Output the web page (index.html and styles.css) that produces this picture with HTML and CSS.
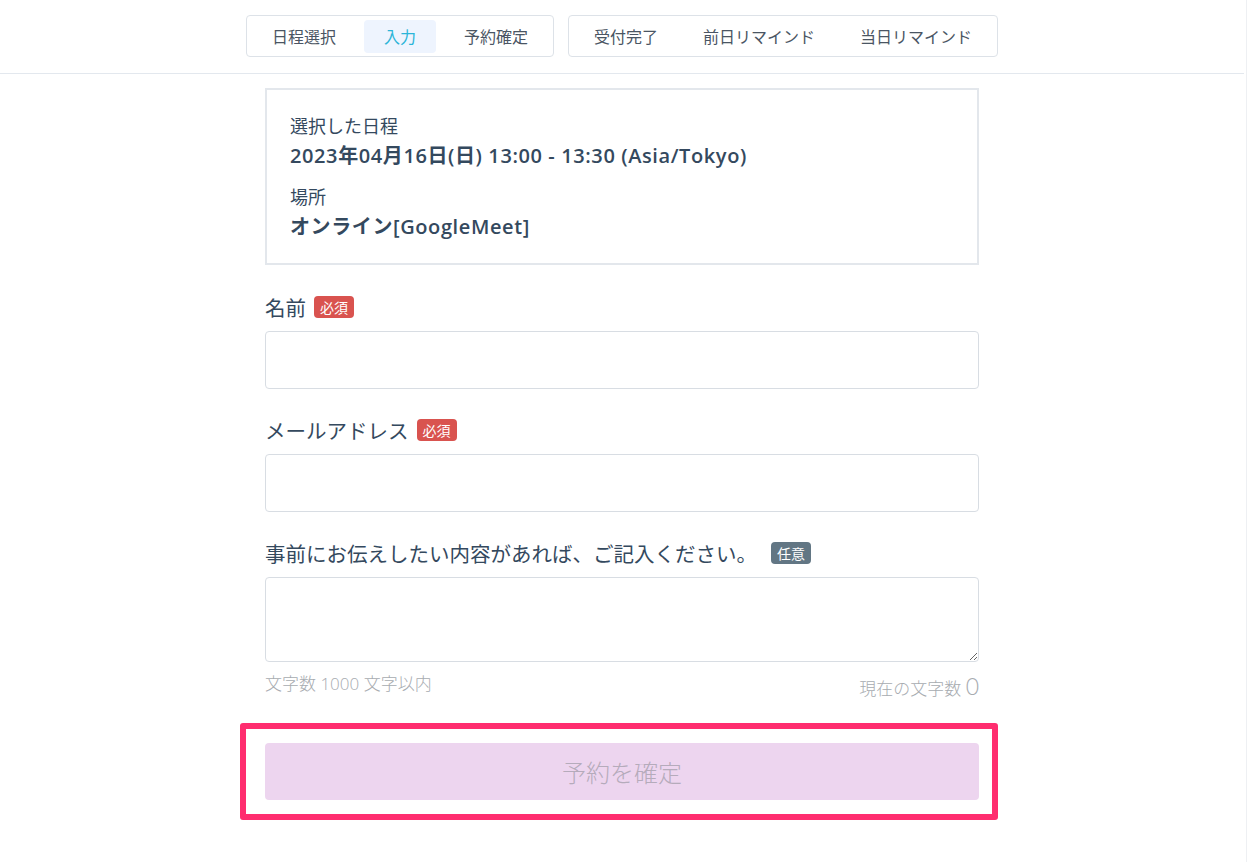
FILE: index.html
```html
<!DOCTYPE html>
<html lang="ja">
<head>
<meta charset="utf-8">
<title>予約入力</title>
<link rel="stylesheet" href="styles.css">
</head>
<body>
<div class="page">
  <header class="header">
    <nav class="tabgroup">
      <span class="tab">日程選択</span>
      <span class="tab active">入力</span>
      <span class="tab">予約確定</span>
    </nav>
    <nav class="tabgroup right">
      <span class="tab">受付完了</span>
      <span class="tab">前日リマインド</span>
      <span class="tab">当日リマインド</span>
    </nav>
  </header>
  <main class="main">
    <section class="summary">
      <div class="sum-label">選択した日程</div>
      <div class="sum-value">2023年04月16日(日) 13:00 - 13:30 (Asia/Tokyo)</div>
      <div class="sum-label second">場所</div>
      <div class="sum-value">オンライン[GoogleMeet]</div>
    </section>

    <div class="field">
      <label class="label">名前<span class="badge req">必須</span></label>
      <input class="input" type="text">
    </div>
    <div class="field">
      <label class="label">メールアドレス<span class="badge req">必須</span></label>
      <input class="input" type="email">
    </div>
    <div class="field">
      <label class="label">事前にお伝えしたい内容があれば、ご記入ください。<span class="badge opt">任意</span></label>
      <textarea class="textarea"></textarea>
      <div class="counter">
        <span class="limit">文字数 1000 文字以内</span>
        <span class="current">現在の文字数 <span class="num">0</span></span>
      </div>
    </div>

    <div class="highlight">
      <button class="submit" type="button">予約を確定</button>
    </div>
  </main>
</div>
</body>
</html>
```

FILE: styles.css
```css
* { box-sizing: border-box; }
html, body { margin: 0; padding: 0; background: #fff; }
body {
  font-family: "Open Sans", "Noto Sans CJK JP", sans-serif;
  color: #34495e;
}
.page {
  width: 1247px;
  min-height: 862px;
  padding-right: 2px;
  border-right: 1px solid #eef0f3;
}
.header {
  display: flex;
  justify-content: center;
  gap: 14px;
  padding: 15px 0 16px;
  border-bottom: 1px solid #e3e8ee;
}
.tabgroup {
  display: flex;
  align-items: center;
  gap: 8px;
  height: 42px;
  padding: 0 5px;
  border: 1px solid #dde2e8;
  border-radius: 4px;
}
.tabgroup.right { gap: 5px; }
.tab {
  display: flex;
  align-items: center;
  height: 33px;
  padding: 0 20px;
  font-family: "Noto Sans CJK JP", sans-serif;
  font-size: 16px;
  font-weight: 400;
  color: #4a5563;
  border-radius: 4px;
}
.tab.active {
  background: #eef4fe;
  color: #2bb5d8;
}
.main {
  width: 714px;
  margin: 14px auto 0;
}
.summary {
  border: 2px solid #e3e7ec;
  padding: 22px 23px 22px;
}
.sum-label {
  font-family: "Noto Sans CJK JP", sans-serif;
  font-size: 18px;
  font-weight: 400;
  line-height: 26px;
  margin-bottom: 4px;
}
.sum-label.second { margin-top: 13px; }
.sum-value {
  font-size: 20px;
  font-weight: 600;
  letter-spacing: 0.6px;
  line-height: 28px;
}
.field { margin-top: 26px; }
.summary + .field { margin-top: 27px; }
.label {
  display: flex;
  align-items: center;
  height: 30px;
  margin-bottom: 9px;
  font-family: "Noto Sans CJK JP", sans-serif;
  font-size: 20.5px;
  font-weight: 400;
}
.badge {
  display: inline-flex;
  align-items: center;
  justify-content: center;
  height: 22px;
  padding: 0 6px;
  margin-left: 8px;
  border-radius: 4px;
  font-size: 14px;
  font-weight: 400;
  color: #fff;
}
.badge.req { background: #d9534f; }
.badge.opt { background: #627684; margin-left: 14px; }
.input, .textarea {
  display: block;
  width: 100%;
  border: 1px solid #d8dde3;
  border-radius: 4px;
  background: #fff;
  font-size: 16px;
}
.input { height: 58px; }
.textarea { height: 85px; resize: vertical; }
.counter {
  display: flex;
  justify-content: space-between;
  align-items: flex-start;
  margin-top: 10px;
  font-family: "Open Sans", "Noto Sans CJK JP", sans-serif;
  font-size: 17px;
  font-weight: 300;
  line-height: 24px;
  color: #a7abb0;
}
.current { margin-top: 3px; }
.current .num {
  font-family: "Lato", sans-serif;
  font-size: 23px;
  font-weight: 300;
  line-height: 1;
}
.highlight {
  width: 758px;
  margin: 22px 0 0 -25px;
  padding: 14px 13px 14px 19px;
  border: 6px solid #ff2d6f;
  border-radius: 3px;
}
.submit {
  display: block;
  width: 100%;
  height: 57px;
  border: none;
  border-radius: 4px;
  background: #edd5ef;
  color: #b5abbb;
  font-family: "Noto Sans CJK JP", sans-serif;
  font-size: 24px;
  font-weight: 300;
  cursor: not-allowed;
}
```
